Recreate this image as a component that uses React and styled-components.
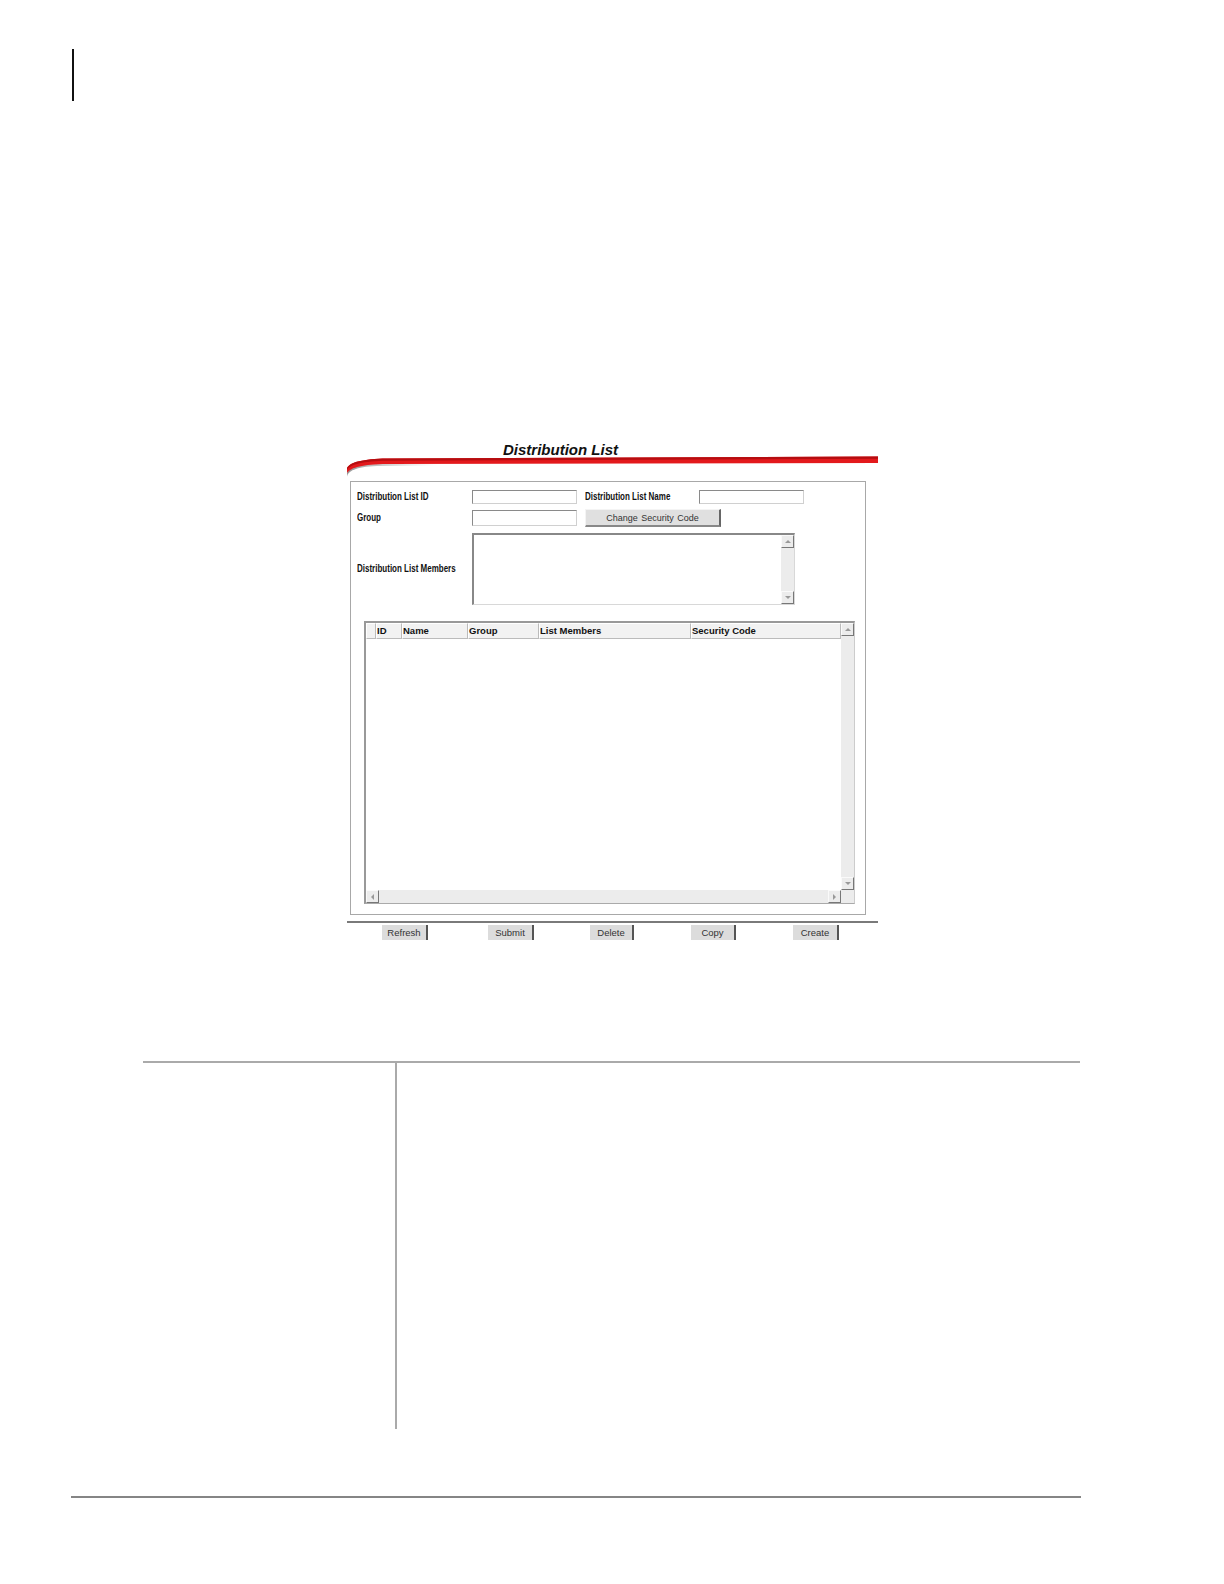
import React from "react";
import styled, { createGlobalStyle } from "styled-components";

const Global = createGlobalStyle`
  html, body { margin: 0; padding: 0; background: #ffffff; }
  body { font-family: "Liberation Sans", Arial, sans-serif; }
`;

const Page = styled.div`
  width: 1224px;
  height: 1584px;
  background: #fff;
  padding-top: 49px;
  box-sizing: border-box;
  display: flex;
  flex-direction: column;
`;

const Marker = styled.div`
  margin-left: 72px;
  width: 2px;
  height: 52px;
  background: #111;
`;

const Figure = styled.div`
  margin-top: 339px;
  margin-left: 347px;
  width: 531px;
  display: flex;
  flex-direction: column;
`;

const TitleBar = styled.div`
  position: relative;
  height: 41px;
`;

const Title = styled.div`
  position: absolute;
  left: 156px;
  top: 1px;
  font-family: "Liberation Sans", Arial, sans-serif;
  font-weight: bold;
  font-style: italic;
  font-size: 15px;
  line-height: 17px;
  color: #111;
`;

const Swoosh = styled.svg`
  position: absolute;
  left: 0;
  top: 14px;
`;

const Box = styled.div`
  margin-left: 3px;
  width: 516px;
  height: 434px;
  border: 1px solid #a8a8a8;
  box-sizing: border-box;
  padding: 8px 0 0 6px;
  display: flex;
  flex-direction: column;
`;

const Row = styled.div`
  display: flex;
  align-items: center;
  margin-top: ${(p) => p.$mt || 0}px;
`;

const Label = styled.div`
  width: ${(p) => p.$w}px;
  flex: none;
  display: flex;
  align-items: center;
  height: 14px;
  font-size: 10px;
  line-height: 14px;
  white-space: nowrap;
`;

const LabelText = styled.span`
  display: inline-block;
  transform: scaleX(0.8);
  transform-origin: left center;
  font-family: "Liberation Sans", Arial, sans-serif;
  font-weight: bold;
  font-size: 10px;
  line-height: 14px;
  color: #111;
`;

const Input = styled.div`
  width: 105px;
  height: ${(p) => p.$h || 14}px;
  box-sizing: border-box;
  border-top: 1px solid #8a8a8a;
  border-left: 1px solid #8a8a8a;
  border-right: 1px solid #d0d0d0;
  border-bottom: 1px solid #d0d0d0;
  background: #fff;
  flex: none;
`;

const Gap = styled.div`
  width: ${(p) => p.$w}px;
  flex: none;
`;

const WideButton = styled.div`
  width: 136px;
  height: 18px;
  box-sizing: border-box;
  background: #e0e0e0;
  border-top: 1px solid #f4f4f4;
  border-left: 1px solid #f4f4f4;
  border-right: 2px solid #666;
  border-bottom: 2px solid #888;
  display: flex;
  align-items: center;
  justify-content: center;
  font-size: 9px;
  color: #333;
  word-spacing: 1px;
`;

const TextArea = styled.div`
  width: 323px;
  height: 72px;
  box-sizing: border-box;
  border-top: 2px solid #888;
  border-left: 2px solid #888;
  border-right: 1px solid #d8d8d8;
  border-bottom: 1px solid #d8d8d8;
  display: flex;
  justify-content: flex-end;
  flex: none;
`;

const VScroll = styled.div`
  width: 13px;
  background: #ececec;
  display: flex;
  flex-direction: column;
  justify-content: space-between;
  flex: none;
`;

const HScroll = styled.div`
  height: 13px;
  background: #ececec;
  display: flex;
  justify-content: space-between;
  flex: 1;
`;

const Arrow = styled.div`
  width: 13px;
  height: 13px;
  box-sizing: border-box;
  background: #ececec;
  border-top: 1px solid #fafafa;
  border-left: 1px solid #fafafa;
  border-right: 1px solid #777;
  border-bottom: 1px solid #777;
  display: flex;
  align-items: center;
  justify-content: center;
  flex: none;
  &::after {
    content: "";
    width: 0;
    height: 0;
    ${(p) =>
      p.$dir === "up"
        ? "border-left: 3px solid transparent; border-right: 3px solid transparent; border-bottom: 3px solid #999;"
        : p.$dir === "down"
        ? "border-left: 3px solid transparent; border-right: 3px solid transparent; border-top: 3px solid #999;"
        : p.$dir === "left"
        ? "border-top: 3px solid transparent; border-bottom: 3px solid transparent; border-right: 3px solid #999;"
        : "border-top: 3px solid transparent; border-bottom: 3px solid transparent; border-left: 3px solid #999;"}
  }
`;

const Table = styled.div`
  margin-top: 16px;
  margin-left: 7px;
  width: 491px;
  height: 283px;
  box-sizing: border-box;
  border-top: 2px solid #999;
  border-left: 2px solid #999;
  border-right: 1px solid #ccc;
  border-bottom: 1px solid #aaa;
  display: flex;
  flex-direction: column;
`;

const TableMain = styled.div`
  flex: 1;
  display: flex;
`;

const TableBody = styled.div`
  flex: 1;
  display: flex;
  flex-direction: column;
`;

const HeadRow = styled.div`
  display: flex;
  height: 16px;
`;

const HeadCell = styled.div`
  width: ${(p) => p.$w}px;
  flex: none;
  box-sizing: border-box;
  background: #f2f2f2;
  border-right: 1px solid #bbb;
  border-bottom: 1px solid #bbb;
  border-top: 1px solid #fff;
  border-left: 1px solid #fff;
  font-family: "Liberation Sans", Arial, sans-serif;
  font-weight: bold;
  font-size: 9.5px;
  line-height: 14px;
  color: #111;
  white-space: nowrap;
`;

const BottomBar = styled.div`
  display: flex;
  height: 13px;
`;

const Corner = styled.div`
  width: 13px;
  background: #ececec;
  flex: none;
`;

const Rule = styled.div`
  margin-top: 6px;
  height: 2px;
  background: #7a7a7a;
`;

const ButtonRow = styled.div`
  margin-top: 2px;
  display: flex;
`;

const SmallButton = styled.div`
  width: ${(p) => p.$w}px;
  margin-left: ${(p) => p.$ml}px;
  flex: none;
  height: 15px;
  box-sizing: border-box;
  background: #dcdcdc;
  border-right: 2px solid #555;
  display: flex;
  align-items: center;
  justify-content: center;
  font-size: 9.5px;
  color: #333;
`;

const LowerTable = styled.div`
  margin-top: 121px;
  margin-left: 143px;
  width: 937px;
  border-top: 2px solid #aaaaaa;
  display: flex;
`;

const LeftCell = styled.div`
  width: 252px;
  height: 366px;
  border-right: 2px solid #aaaaaa;
`;

const Footer = styled.div`
  margin-top: 67px;
  margin-left: 71px;
  width: 1010px;
  height: 2px;
  background: #858585;
`;

const headers = [
  ["", 10],
  ["ID", 26],
  ["Name", 66],
  ["Group", 71],
  ["List Members", 152],
  ["Security Code", 150],
];

const buttons = [
  ["Refresh", 46, 35],
  ["Submit", 46, 60],
  ["Delete", 44, 56],
  ["Copy", 45, 57],
  ["Create", 46, 57],
];

export default function App() {
  return (
    <>
      <Global />
      <Page>
        <Marker />
        <Figure>
          <TitleBar>
            <Swoosh width="531" height="24" viewBox="0 0 531 24">
              <defs>
                <linearGradient id="shade" x1="0" y1="0" x2="1" y2="0">
                  <stop offset="0" stopColor="#8a8a8a" stopOpacity="0.9" />
                  <stop offset="1" stopColor="#bbbbbb" stopOpacity="0" />
                </linearGradient>
              </defs>
              <path d="M0,23 C1,17 8,13 30,12 L90,11.5 L90,9.5 L30,10 C10,10.5 2,14 0,19 Z" fill="url(#shade)" />
              <path d="M531,2.5 L531,9 L40,10 C16,10.5 4,13 0,19 L0,14 C3,8 16,5 40,4.5 Z" fill="#e3191c" />
              <path d="M531,2.5 L531,4.8 L40,6.8 C16,7.3 4,10 0,16 L0,14 C3,8 16,5 40,4.5 Z" fill="#b50d10" />
            </Swoosh>
            <Title>Distribution List</Title>
          </TitleBar>
          <Box>
            <Row>
              <Label $w={115}><LabelText>Distribution List ID</LabelText></Label>
              <Input />
              <Gap $w={8} />
              <Label $w={114}><LabelText>Distribution List Name</LabelText></Label>
              <Input />
            </Row>
            <Row $mt={5}>
              <Label $w={115}><LabelText>Group</LabelText></Label>
              <Input $h={16} />
              <Gap $w={8} />
              <WideButton>Change Security Code</WideButton>
            </Row>
            <Row $mt={6}>
              <Label $w={115}><LabelText>Distribution List Members</LabelText></Label>
              <TextArea>
                <VScroll>
                  <Arrow $dir="up" />
                  <Arrow $dir="down" />
                </VScroll>
              </TextArea>
            </Row>
            <Table>
              <TableMain>
                <TableBody>
                  <HeadRow>
                    {headers.map(([t, w], i) => (
                      <HeadCell key={i} $w={w}>{t}</HeadCell>
                    ))}
                  </HeadRow>
                </TableBody>
                <VScroll>
                  <Arrow $dir="up" />
                  <Arrow $dir="down" />
                </VScroll>
              </TableMain>
              <BottomBar>
                <HScroll>
                  <Arrow $dir="left" />
                  <Arrow $dir="right" />
                </HScroll>
                <Corner />
              </BottomBar>
            </Table>
          </Box>
          <Rule />
          <ButtonRow>
            {buttons.map(([t, w, ml]) => (
              <SmallButton key={t} $w={w} $ml={ml}>{t}</SmallButton>
            ))}
          </ButtonRow>
        </Figure>
        <LowerTable>
          <LeftCell />
        </LowerTable>
        <Footer />
      </Page>
    </>
  );
}
